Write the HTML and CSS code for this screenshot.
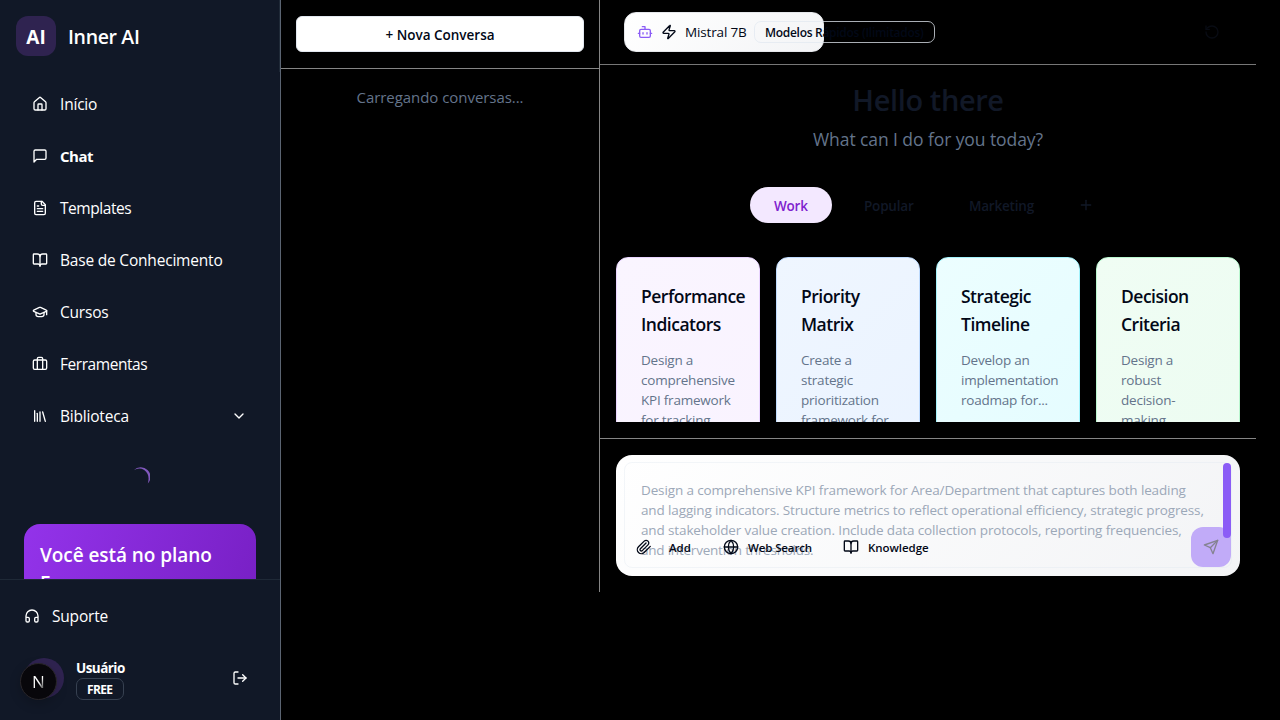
FILE: index.html
```html
<!DOCTYPE html>
<html lang="pt-BR">
<head>
<meta charset="utf-8">
<title>Inner AI</title>
<link rel="stylesheet" href="styles.css">
</head>
<body>
<svg class="sprite" aria-hidden="true">
  <symbol id="book" viewBox="0 0 24 24"><path d="M12 7v14"/><path d="M3 18a1 1 0 0 1-1-1V4a1 1 0 0 1 1-1h5a4 4 0 0 1 4 4 4 4 0 0 1 4-4h5a1 1 0 0 1 1 1v13a1 1 0 0 1-1 1h-6a3 3 0 0 0-3 3 3 3 0 0 0-3-3z"/></symbol>
</svg>
<div class="app">
  <aside class="sidebar">
    <header class="brand"><div class="logo">AI</div><span class="brand-name">Inner AI</span></header>
    <div class="side-scroll">
      <nav class="nav">
        <a class="nav-item"><svg class="icon" viewBox="0 0 24 24"><path d="M15 21v-8a1 1 0 0 0-1-1h-4a1 1 0 0 0-1 1v8"/><path d="M3 10a2 2 0 0 1 .709-1.528l7-5.999a2 2 0 0 1 2.582 0l7 5.999A2 2 0 0 1 21 10v9a2 2 0 0 1-2 2H5a2 2 0 0 1-2-2z"/></svg><span>Início</span></a>
        <a class="nav-item active"><svg class="icon" viewBox="0 0 24 24"><path d="M21 15a2 2 0 0 1-2 2H7l-4 4V5a2 2 0 0 1 2-2h14a2 2 0 0 1 2 2z"/></svg><span>Chat</span></a>
        <a class="nav-item tight"><svg class="icon" viewBox="0 0 24 24"><path d="M15 2H6a2 2 0 0 0-2 2v16a2 2 0 0 0 2 2h12a2 2 0 0 0 2-2V7Z"/><path d="M14 2v4a2 2 0 0 0 2 2h4"/><path d="M10 9H8"/><path d="M16 13H8"/><path d="M16 17H8"/></svg><span>Templates</span></a>
        <a class="nav-item raised"><svg class="icon"><use href="#book"/></svg><span>Base de Conhecimento</span></a>
        <a class="nav-item"><svg class="icon" viewBox="0 0 24 24"><path d="M21.42 10.922a1 1 0 0 0-.019-1.838L12.83 5.18a2 2 0 0 0-1.66 0L2.6 9.08a1 1 0 0 0 0 1.832l8.57 3.908a2 2 0 0 0 1.66 0z"/><path d="M22 10v6"/><path d="M6 12.5V16a6 3 0 0 0 12 0v-3.5"/></svg><span>Cursos</span></a>
        <a class="nav-item tight raised"><svg class="icon" viewBox="0 0 24 24"><path d="M16 20V4a2 2 0 0 0-2-2h-4a2 2 0 0 0-2 2v16"/><rect width="20" height="14" x="2" y="6" rx="2"/></svg><span>Ferramentas</span></a>
        <a class="nav-item"><svg class="icon" viewBox="0 0 24 24"><path d="m16 6 4 14"/><path d="M12 6v14"/><path d="M8 8v12"/><path d="M4 4v16"/></svg><span>Biblioteca</span><svg class="icon chevron" viewBox="0 0 24 24"><path d="m6 9 6 6 6-6"/></svg></a>
      </nav>
      <div class="loading"><svg class="spinner" viewBox="0 0 20 20"><path d="M3.8 3.2A9 9 0 0 1 17.8 16.6Q20.4 7.5 14.2 2.9Q9-.2 3.8 3.2Z"/></svg></div>
      <section class="plan"><h2>Você está no plano<br>Free</h2></section>
    </div>
    <footer class="side-foot">
      <a class="support"><svg class="icon" viewBox="0 0 24 24"><path d="M3 14h3a2 2 0 0 1 2 2v3a2 2 0 0 1-2 2H5a2 2 0 0 1-2-2v-7a9 9 0 0 1 18 0v7a2 2 0 0 1-2 2h-1a2 2 0 0 1-2-2v-3a2 2 0 0 1 2-2h3"/></svg><span>Suporte</span></a>
      <div class="user">
        <div class="avatar"><div class="dev-badge"><span>N</span></div></div>
        <div class="user-info"><span class="user-name">Usuário</span><span class="tier">FREE</span></div>
        <svg class="icon logout" viewBox="0 0 24 24"><path d="M9 21H5a2 2 0 0 1-2-2V5a2 2 0 0 1 2-2h4"/><path d="m16 17 5-5-5-5"/><path d="M21 12H9"/></svg>
      </div>
    </footer>
  </aside>

  <section class="history">
    <div class="history-head"><button class="new-chat">+ Nova Conversa</button></div>
    <p class="history-status">Carregando conversas...</p>
  </section>

  <main class="chat">
    <header class="chat-head">
      <div class="model">
        <svg class="icon bot" viewBox="0 0 24 24"><path d="M12 8V4H8"/><rect width="16" height="12" x="4" y="8" rx="2"/><path d="M2 14h2"/><path d="M20 14h2"/><path d="M15 13v2"/><path d="M9 13v2"/></svg>
        <svg class="icon" viewBox="0 0 24 24"><path d="M4 14a1 1 0 0 1-.78-1.63l9.9-10.2a.5.5 0 0 1 .86.46l-1.92 6.02A1 1 0 0 0 13 10h7a1 1 0 0 1 .78 1.63l-9.9 10.2a.5.5 0 0 1-.86-.46l1.92-6.02A1 1 0 0 0 11 14z"/></svg>
        <span class="model-name">Mistral 7B</span>
        <span class="model-tag">Modelos Rápidos (Ilimitados)</span>
      </div>
      <svg class="icon reset" viewBox="0 0 24 24"><path d="M3 12a9 9 0 1 0 9-9 9.75 9.75 0 0 0-6.74 2.74L3 8"/><path d="M3 3v5h5"/></svg>
    </header>
    <div class="welcome">
      <h1>Hello there</h1>
      <p class="subtitle">What can I do for you today?</p>
      <div class="tabs"><span class="tab selected">Work</span><span class="tab popular">Popular</span><span class="tab marketing">Marketing</span><svg class="icon plus" viewBox="0 0 24 24"><path d="M5 12h14"/><path d="M12 5v14"/></svg></div>
      <div class="cards">
        <article class="card purple"><h3>Performance<br>Indicators</h3><p>Design a<br>comprehensive<br>KPI framework<br>for tracking</p></article>
        <article class="card blue"><h3>Priority<br>Matrix</h3><p>Create a<br>strategic<br>prioritization<br>framework for</p></article>
        <article class="card cyan"><h3>Strategic<br>Timeline</h3><p>Develop an<br>implementation<br>roadmap for...</p></article>
        <article class="card green"><h3>Decision<br>Criteria</h3><p>Design a<br>robust<br>decision-<br>making</p></article>
      </div>
    </div>
    <div class="composer-wrap">
      <div class="composer">
        <div class="prompt">Design a comprehensive KPI framework for Area/Department that captures both leading<br>and lagging indicators. Structure metrics to reflect operational efficiency, strategic progress,<br>and stakeholder value creation. Include data collection protocols, reporting frequencies,<br><span class="last-line">and intervention thresholds.</span></div>
        <div class="tools">
          <span class="tool add"><svg class="icon" viewBox="0 0 24 24"><path d="m21.44 11.05-9.19 9.19a6 6 0 0 1-8.49-8.49l8.57-8.57A4 4 0 1 1 18 8.84l-8.59 8.57a2 2 0 0 1-2.83-2.83l8.49-8.48"/></svg><span>Add</span></span>
          <span class="tool web"><svg class="icon" viewBox="0 0 24 24"><circle cx="12" cy="12" r="10"/><path d="M12 2a14.5 14.5 0 0 0 0 20 14.5 14.5 0 0 0 0-20"/><path d="M2 12h20"/></svg><span>Web Search</span></span>
          <span class="tool knowledge"><svg class="icon"><use href="#book"/></svg><span>Knowledge</span></span>
        </div>
        <div class="send"><svg class="icon" viewBox="0 0 24 24"><path d="m22 2-7 20-4-9-9-4Z"/><path d="M22 2 11 13"/></svg></div>
        <div class="thumb"></div>
      </div>
    </div>
  </main>
</div>
</body>
</html>
```
FILE: styles.css
```css
* { box-sizing: border-box; }
body {
  margin: 0;
  background: #000;
  color: #020817;
  font-family: "Open Sans", "Noto Sans", sans-serif;
  font-size: 14px;
  overflow: hidden;
}
h1, h2, h3, p { margin: 0; }
.sprite { display: none; }
.icon {
  width: 16px;
  height: 16px;
  flex: none;
  fill: none;
  stroke: currentColor;
  stroke-width: 2;
  stroke-linecap: round;
  stroke-linejoin: round;
}
.app { display: flex; height: 720px; white-space: nowrap; }

.sidebar {
  width: 281px;
  flex: none;
  display: flex;
  flex-direction: column;
  background: #111827;
  border-right: 1px solid #5b6472;
  color: #fff;
}
.brand { height: 72px; flex: none; display: flex; align-items: center; gap: 12px; padding: 0 16px; border-right: 1px solid #1f2937; }
.logo {
  width: 40px;
  height: 40px;
  border-radius: 12px;
  background: #2f2350;
  display: flex;
  align-items: center;
  justify-content: center;
  padding-top: 1px;
  font-size: 19px;
  font-weight: 700;
}
.brand-name { padding-top: 1px; font-size: 19.5px; font-weight: 600; letter-spacing: -0.35px; }
.side-scroll { height: 507px; overflow: hidden; flex: none; }
.nav { display: flex; flex-direction: column; gap: 4px; padding: 8px 16px 0; }
.nav-item { height: 48px; display: flex; align-items: center; gap: 12px; padding: 0 16px; font-size: 15.5px; letter-spacing: -0.2px; }
.nav-item.tight { letter-spacing: -0.45px; }
.nav-item.raised { padding-bottom: 1px; }
.nav-item.active { padding-bottom: 1px; font-weight: 700; font-size: 15px; letter-spacing: -0.5px; }
.chevron { margin: 0 1px 0 auto; }
.loading { height: 84px; display: flex; justify-content: center; padding: 27px 0 0; }
.spinner { width: 20px; height: 20px; fill: #8158bd; }
.plan {
  margin: 0 24px;
  height: 180px;
  padding: 17px 16px;
  border-radius: 16px;
  background: linear-gradient(110deg, #9333ea, #741dbf);
}
.plan h2 { font-size: 19px; line-height: 28px; font-weight: 600; letter-spacing: -0.06px; }
.side-foot { flex: 1; border-top: 1px solid #1f2937; padding: 16px; }
.support { height: 40px; display: flex; align-items: center; gap: 12px; padding: 0 8px; font-size: 15.5px; letter-spacing: -0.2px; }
.user { margin-top: 20px; display: flex; align-items: center; padding: 0 16px 0 8px; }
.avatar { position: relative; width: 40px; height: 40px; border-radius: 50%; background: #2f2350; margin-right: 12px; }
.dev-badge {
  position: absolute;
  left: -4px;
  top: 5px;
  width: 37px;
  height: 37px;
  border-radius: 50%;
  border: 1px solid #29262a;
  background: #08070b;
  box-shadow: 0 4px 12px rgba(0, 0, 0, .2);
  display: flex;
  align-items: center;
  justify-content: center;
  font-size: 17px;
}
.dev-badge span { background: linear-gradient(125deg, #fff 55%, #777 75%); -webkit-background-clip: text; background-clip: text; color: transparent; }
.user-info { display: flex; flex-direction: column; align-items: flex-start; padding-top: 2px; }
.user-name { font-size: 13.5px; line-height: 20px; font-weight: 700; letter-spacing: -0.55px; }
.tier { width: 48px; height: 22px; border: 1px solid #374151; border-radius: 7px; padding: 0 10px; font-size: 12px; line-height: 21px; font-weight: 700; letter-spacing: -0.65px; }
.logout { margin-left: auto; }

.history { width: 319px; height: 592px; flex: none; border-right: 1px solid #858585; }
.history-head { height: 69px; padding: 16px 15px; border-bottom: 1px solid #858585; }
.new-chat {
  display: block;
  width: 288px;
  height: 36px;
  padding: 2px 0 0;
  border: 1px solid #e2e8f0;
  border-radius: 6px;
  background: #fff;
  color: #020817;
  font: 600 13.5px "Open Sans", sans-serif;
}
.history-status { text-align: center; padding-top: 16px; font-size: 15px; line-height: 25px; letter-spacing: -0.05px; color: #64748b; }

.chat { width: 656px; height: 592px; display: flex; flex-direction: column; }
.chat-head { height: 65px; flex: none; display: flex; align-items: center; padding: 0 36px 1px 24px; border-bottom: 1px solid #777; }
.model {
  width: 200px;
  height: 40px;
  display: flex;
  align-items: center;
  gap: 8px;
  padding: 0 12px;
  border-radius: 12px;
  border: 1px solid #e5e7eb;
  background: linear-gradient(135deg, #fff, #f3f4f6);
}
.bot { color: #8b5cf6; }
.model-name { width: 61px; padding-top: 1px; font-size: 13.5px; letter-spacing: -0.15px; }
.model-tag { width: 181px; height: 22px; flex: none; border: 1px solid rgba(226, 232, 240, .75); border-radius: 7px; padding: 0 10px; font-size: 12px; line-height: 21px; font-weight: 600; letter-spacing: -0.29px; }
.reset { margin-left: auto; color: #080b13; }
.welcome { height: 357px; overflow: hidden; padding: 16px 16px 0; }
h1 { padding-top: 1px; margin-bottom: 1px; text-align: center; font-size: 29px; line-height: 36px; font-weight: 600; letter-spacing: -0.4px; color: #111827; }
.subtitle { text-align: center; padding-top: 6px; font-size: 17.5px; line-height: 28px; letter-spacing: -0.08px; color: #64748b; }
.tabs { display: flex; align-items: center; gap: 8px; margin: 34px 0 34px 134px; color: #111827; font-size: 13.5px; font-weight: 600; letter-spacing: -0.2px; }
.tab { height: 36px; line-height: 38px; padding: 0 24px; border-radius: 18px; }
.selected { width: 82px; background: #f3e8ff; color: #7e22ce; }
.popular { width: 97px; }
.marketing { width: 113px; }
.plus { margin-left: 12px; }
.cards { display: grid; grid-template-columns: repeat(4, 144px); gap: 16px; }
.card { height: 220px; padding: 24px; border: 1px solid; border-radius: 12px; }
.card h3 { font-size: 17.5px; line-height: 28px; font-weight: 600; letter-spacing: -0.5px; }
.card p { padding-top: 12px; font-size: 13.5px; line-height: 20px; letter-spacing: -0.22px; color: #64748b; }
.purple { background: linear-gradient(135deg, #faf5ff, #f9f3ff); border-color: #e9d5ff; }
.blue { background: linear-gradient(135deg, #eff6ff, #eaf3ff); border-color: #bfdbfe; }
.cyan { background: linear-gradient(135deg, #ecfeff, #e4fcff); border-color: #a5f3fc; }
.green { background: linear-gradient(135deg, #f0fdf4, #ecfcf1); border-color: #bbf7d0; }
.composer-wrap { margin-top: 16px; border-top: 1px solid #858585; padding: 16px; }
.composer {
  position: relative;
  height: 121px;
  padding: 7px 8px;
  border-radius: 16px;
  background: linear-gradient(135deg, #fff, #f3f4f6);
}
.prompt { height: 106px; border: 1px solid rgba(226, 232, 240, .4); border-radius: 8px; padding: 17px 16px 0; font-size: 13.5px; line-height: 20px; letter-spacing: -0.13px; color: #9ca8b8; }
.last-line { letter-spacing: -0.22px; }
.tools { position: absolute; left: 20px; top: 82px; display: flex; height: 20px; font-size: 11.5px; font-weight: 600; letter-spacing: -0.05px; }
.tool { display: flex; align-items: center; gap: 17px; }
.add { width: 87px; }
.web { width: 120px; gap: 9px; letter-spacing: -0.12px; }
.knowledge { gap: 9px; }
.send {
  position: absolute;
  right: 9px;
  bottom: 9px;
  width: 40px;
  height: 40px;
  border-radius: 12px;
  background: #c1abf8;
  color: #858391;
  display: flex;
  align-items: center;
  justify-content: center;
}
.thumb { position: absolute; right: 9px; top: 8px; width: 8px; height: 75px; border-radius: 4px; background: #8b5cf6; }
```
